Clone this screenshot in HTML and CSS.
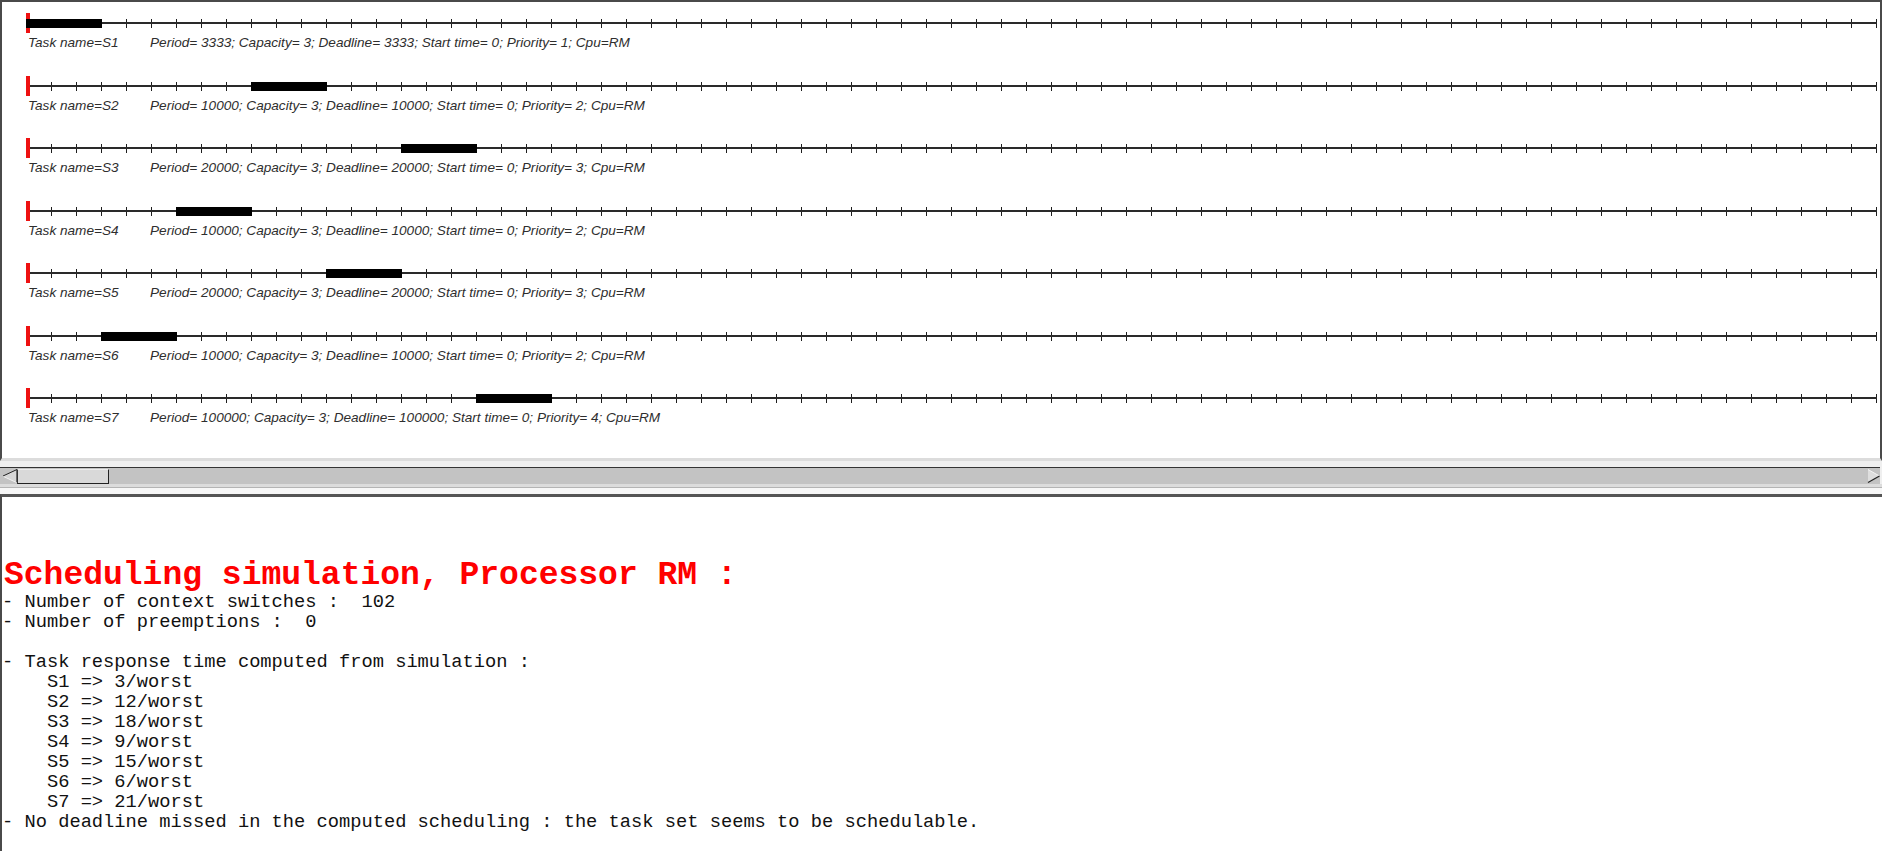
FILE: index.html
```html
<!DOCTYPE html>
<html>
<head>
<meta charset="utf-8">
<title>Scheduling simulation</title>
<link rel="stylesheet" href="styles.css">
</head>
<body>
<div class="top">
  <div class="task">
    <div class="axis"><span class="origin"></span><span class="bar" style="left:0px"></span></div>
    <div class="label"><span class="name">Task name=S1</span><span>Period= 3333; Capacity= 3; Deadline= 3333; Start time= 0; Priority= 1; Cpu=RM</span></div>
  </div>
  <div class="task">
    <div class="axis"><span class="origin"></span><span class="bar" style="left:225px"></span></div>
    <div class="label"><span class="name">Task name=S2</span><span>Period= 10000; Capacity= 3; Deadline= 10000; Start time= 0; Priority= 2; Cpu=RM</span></div>
  </div>
  <div class="task">
    <div class="axis"><span class="origin"></span><span class="bar" style="left:375px"></span></div>
    <div class="label"><span class="name">Task name=S3</span><span>Period= 20000; Capacity= 3; Deadline= 20000; Start time= 0; Priority= 3; Cpu=RM</span></div>
  </div>
  <div class="task">
    <div class="axis"><span class="origin"></span><span class="bar" style="left:150px"></span></div>
    <div class="label"><span class="name">Task name=S4</span><span>Period= 10000; Capacity= 3; Deadline= 10000; Start time= 0; Priority= 2; Cpu=RM</span></div>
  </div>
  <div class="task">
    <div class="axis"><span class="origin"></span><span class="bar" style="left:300px"></span></div>
    <div class="label"><span class="name">Task name=S5</span><span>Period= 20000; Capacity= 3; Deadline= 20000; Start time= 0; Priority= 3; Cpu=RM</span></div>
  </div>
  <div class="task">
    <div class="axis"><span class="origin"></span><span class="bar" style="left:75px"></span></div>
    <div class="label"><span class="name">Task name=S6</span><span>Period= 10000; Capacity= 3; Deadline= 10000; Start time= 0; Priority= 2; Cpu=RM</span></div>
  </div>
  <div class="task">
    <div class="axis"><span class="origin"></span><span class="bar" style="left:450px"></span></div>
    <div class="label"><span class="name">Task name=S7</span><span>Period= 100000; Capacity= 3; Deadline= 100000; Start time= 0; Priority= 4; Cpu=RM</span></div>
  </div>
</div>
<div class="scroll-area">
  <div class="scrollbar">
    <svg class="arrow-left" width="16" height="16" viewBox="0 0 16 16">
      <polygon points="1,8 15,1.5 15,14.5" fill="#d6d6d6"/>
      <line x1="1" y1="8" x2="15" y2="1.5" stroke="#222" stroke-width="1"/>
      <line x1="15" y1="1.5" x2="15" y2="14.5" stroke="#222" stroke-width="1.2"/>
      <line x1="1.5" y1="8.5" x2="14.5" y2="14.5" stroke="#f2f2f2" stroke-width="1"/>
    </svg>
    <div class="thumb"></div>
    <div class="trough-fill"></div>
    <svg class="arrow-right" width="13" height="16" viewBox="0 0 13 16">
      <polygon points="1,1.5 12.5,8 1,14.5" fill="#dedede"/>
      <line x1="1" y1="1.5" x2="12.5" y2="8" stroke="#f4f4f4" stroke-width="1"/>
      <line x1="1" y1="14.5" x2="12.5" y2="8" stroke="#222" stroke-width="1.2"/>
    </svg>
  </div>
  <div class="scroll-foot"></div>
</div>
<div class="bottom">
  <div class="heading">Scheduling simulation, Processor RM :</div>
<pre class="report">- Number of context switches :  102
- Number of preemptions :  0

- Task response time computed from simulation :
    S1 => 3/worst
    S2 => 12/worst
    S3 => 18/worst
    S4 => 9/worst
    S5 => 15/worst
    S6 => 6/worst
    S7 => 21/worst
- No deadline missed in the computed scheduling : the task set seems to be schedulable.</pre>
</div>
</body>
</html>
```
FILE: styles.css
```css
html, body {
  margin: 0;
  padding: 0;
}
body {
  width: 1882px;
  height: 851px;
  overflow: hidden;
  display: flex;
  flex-direction: column;
  background: #ffffff;
}

.top {
  box-sizing: border-box;
  height: 461px;
  flex: none;
  background: #ffffff;
  border-top: 2px solid #4a4a4a;
  border-left: 2px solid #4a4a4a;
  border-right: 2px solid #4a4a4a;
  border-bottom: 3px solid #dcdcdc;
  display: flex;
  flex-direction: column;
}

.task {
  height: 62.5px;
  flex: none;
  display: flex;
  flex-direction: column;
}

.axis {
  position: relative;
  margin-left: 24px;
  width: 1851px;
  height: 32px;
  background-image:
    linear-gradient(#2a2a2a, #2a2a2a),
    repeating-linear-gradient(90deg, #1e1e1e 0 1px, transparent 1px 25px);
  background-size: 100% 2px, 100% 9px;
  background-position: 0 20px, 0 17px;
  background-repeat: no-repeat;
}

.origin {
  position: absolute;
  left: 0;
  top: 11px;
  width: 4px;
  height: 20px;
  background: #ee1111;
}

.bar {
  position: absolute;
  top: 17px;
  width: 76px;
  height: 9px;
  background: #000000;
}

.label {
  margin-top: 1px;
  padding-left: 26px;
  display: flex;
  font-family: "Liberation Sans", Arial, sans-serif;
  font-style: italic;
  font-size: 13.6px;
  line-height: 15px;
  color: #2e2e2e;
  white-space: pre;
}

.name {
  width: 122px;
  flex: none;
}

.scroll-area {
  flex: none;
  background: #efefef;
  padding-top: 6px;
}

.scrollbar {
  box-sizing: border-box;
  width: 1880px;
  height: 17px;
  border-top: 1px solid #333333;
  background: #c3c3c3;
  display: flex;
  align-items: stretch;
  padding-left: 2px;
}

.arrow-left {
  flex: none;
  display: block;
}

.thumb {
  box-sizing: border-box;
  flex: none;
  width: 92px;
  margin: 1px 0 0 -1px;
  height: 15px;
  background: #d9d9d9;
  border-left: 1px solid #333333;
  border-top: 1px solid #ececec;
  border-right: 1px solid #222222;
  border-bottom: 1px solid #222222;
}

.trough-fill {
  flex: 1;
}

.arrow-right {
  flex: none;
  display: block;
}

.scroll-foot {
  height: 10px;
  box-sizing: border-box;
  border-top: 3px solid #dcdcdc;
  background: linear-gradient(#b4b4b4, #b4b4b4) no-repeat 0 0 / 100% 1px, #f7f7f7;
}

.bottom {
  flex: 1;
  box-sizing: border-box;
  border-top: 3px solid #555555;
  border-left: 2px solid #4a4a4a;
  background: #ffffff;
  padding-top: 63px;
}

.heading {
  padding-left: 2px;
  font-family: "Liberation Mono", "Courier New", monospace;
  font-weight: bold;
  font-size: 33px;
  line-height: 32px;
  color: #ff0000;
  white-space: pre;
}

.report {
  margin: 0;
  font-family: "Liberation Mono", "Courier New", monospace;
  font-size: 18.73px;
  line-height: 20px;
  color: #111111;
}
```
